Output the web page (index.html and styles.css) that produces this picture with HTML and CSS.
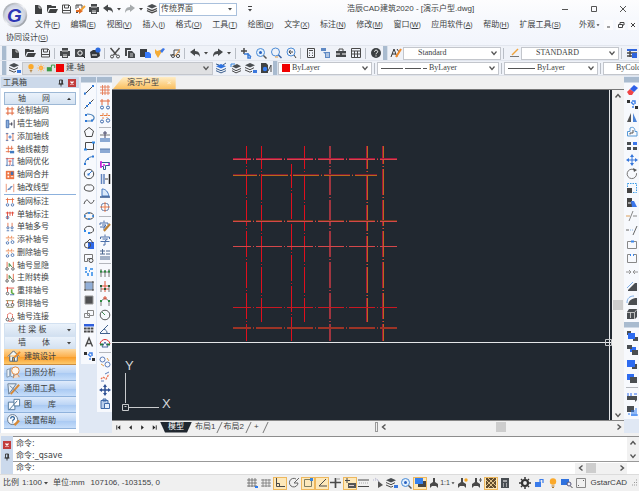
FILE: index.html
```html
<!DOCTYPE html>
<html lang="zh-CN">
<head>
<meta charset="utf-8">
<title>浩辰CAD建筑2020</title>
<link rel="stylesheet" href="styles.css">
</head>
<body>
<svg class="sprite" aria-hidden="true">
<defs>
<linearGradient id="silver" x1="0" y1="0" x2="1" y2="1"><stop offset="0" stop-color="#8b9098"/><stop offset=".5" stop-color="#f4f5f8"/><stop offset="1" stop-color="#777d86"/></linearGradient>
<radialGradient id="face"><stop offset="0" stop-color="#fff"/><stop offset="1" stop-color="#c9cfdd"/></radialGradient>
</defs>
<g>
<symbol id="new" viewBox="0 0 12 12"><path d="M3 2h4l3 3v6H3z" fill="#3f4142" stroke="none"/><path d="M7 2v3h3" stroke="#fff" stroke-width=".7"/></symbol>
<symbol id="open" viewBox="0 0 12 12"><path d="M1 10V2h4l1 1h4v2H3zM4 6h8l-2 4H2z" fill="#3f4142" stroke="none"/></symbol>
<symbol id="save" viewBox="0 0 12 12"><path d="M2.500 10V2H9l1.500 1.500V10zM4.500 2v3h4V2M3 7.500h7"/></symbol>
<symbol id="saveas" viewBox="0 0 12 12"><path d="M2 6V2h6v3M2 9.500h2M4 2v3"/><path d="M2 7h3V5l4 3-4 3V9H2z" fill="#e06c24" stroke="none"/><path d="M7 7l4-4" stroke="#f2a030" stroke-width="2"/></symbol>
<symbol id="print" viewBox="0 0 12 12"><path d="M3 1h6v3h2v5H9v2H3V9H1V4h2z" fill="#46494c" stroke="none"/><path d="M3 4h6M4 8h4M4 9.500h4" stroke="#fff" stroke-width=".8"/></symbol>
<symbol id="undo" viewBox="0 0 12 12"><path d="M1 5l5-3.500V4c4 0 5 3 5 6-1-2-2-3-5-3v2z" fill="#45484a" stroke="none"/></symbol>
<symbol id="redo" viewBox="0 0 12 12"><path d="M11 5L6 1.500V4C2 4 1 7 1 10c1-2 2-3 5-3v2z" fill="#45484a" stroke="none"/></symbol>
<symbol id="redooff" viewBox="0 0 12 12"><path d="M11 5L6 1.500V4C2 4 1 7 1 10c1-2 2-3 5-3v2z" fill="#a7abad" stroke="none"/></symbol>
<symbol id="layers" viewBox="0 0 12 12"><path d="M6 1l5 2.200-5 2.300-5-2.300z" fill="#4a4e52" stroke="none"/><path d="M1 5.500l5 2.200 5-2.200M1 7.700l5 2.200 5-2.200" stroke-width="1.300"/></symbol>
<symbol id="layersb" viewBox="0 0 12 12"><path d="M5 1l5 2.200-5 2.300-5-2.300z" fill="#4a4e52" stroke="none"/><path d="M0 5.500l5 2.200 4-2M0 8l5 2.200 2-1"/><path d="M8 8h4v3H8z" fill="#3b78dc" stroke="none"/></symbol>
<symbol id="layersc" viewBox="0 0 12 12"><path d="M6 2l5 2.200-5 2.300-5-2.300z" fill="#2f72df" stroke="none"/><path d="M1 6.500l5 2.200 5-2.200M1 8.700l5 2.200 5-2.200M1 2l3 1M8 3l3-2" stroke="#3c5f8c"/></symbol>
<symbol id="layersd" viewBox="0 0 12 12"><path d="M7 2l4 2.200-5 2.300-4-2.300z" fill="#4a4e52" stroke="none"/><path d="M2 6.500l4 2.200 5-2.200M2 8.700l4 2.200 5-2.200"/><path d="M1 5V2h4" stroke="#2f82e0"/></symbol>
<symbol id="filed" viewBox="0 0 12 12"><path d="M1 1h5l2 2v8H1z" fill="#3f4142" stroke="none"/><circle cx="5" cy="7" r="2.200" fill="#347bf0" stroke="none"/><path d="M8 9l3-6v7" /></symbol>
<symbol id="preview" viewBox="0 0 12 12"><path d="M1 2h10v8H1z" fill="#46494c" stroke="none"/><circle cx="6" cy="6" r="2.200" stroke="#fff"/><path d="M8 8l3 3" stroke="#222"/></symbol>
<symbol id="plot" viewBox="0 0 12 12"><path d="M1 5l3-2h6l1 6-3 2H2z" fill="#34383c" stroke="none"/><path d="M3 8h5" stroke="#fff"/><circle cx="9" cy="3" r="2.600" fill="#2c6bdf" stroke="none"/></symbol>
<symbol id="cut" viewBox="0 0 12 12"><path d="M1.500 1l6 7M10.500 1l-6 7" stroke-width="1.500"/><circle cx="3" cy="9.500" r="1.500"/><circle cx="9" cy="9.500" r="1.500"/></symbol>
<symbol id="copy" viewBox="0 0 12 12"><path d="M1 1h6v2H3v6H1z M4 4h4l3 3v4H4z" fill="#46494c" stroke="none"/><path d="M6 7h3M6 9h3" stroke="#fff" stroke-width=".7"/></symbol>
<symbol id="paste" viewBox="0 0 12 12"><path d="M1 2h7v8H1z" fill="#3b3f44" stroke="none"/><path d="M6 5h4l2 2v4H6z" fill="#377bff" stroke="none"/></symbol>
<symbol id="brush" viewBox="0 0 12 12"><path d="M1 2l2 2 6-2-2 4-3 5-3-5z" fill="#f5ad38" stroke="none"/><path d="M6 4l3-3 2 1-3 4z" fill="#3a76e8" stroke="none"/></symbol>
<symbol id="block" viewBox="0 0 12 12"><path d="M1 8h4V3h5v3"/><circle cx="4" cy="9" r="1.500"/><path d="M6 9l5-7" stroke="#f0a040"/><circle cx="9" cy="9" r="1.600"/></symbol>
<symbol id="pan" viewBox="0 0 12 12"><path d="M4 1v6M1 4h6" stroke-width="1.500"/><path d="M4 7h4l3 3M8 6v5h3" stroke="#3b7cd8" stroke-width="1.500"/></symbol>
<symbol id="zoomin" viewBox="0 0 12 12"><circle cx="5.500" cy="5.500" r="4" stroke="#4b8bd6" fill="#e2f0fc"/><circle cx="5.500" cy="5.500" r="1.500" fill="#2860c0" stroke="none"/><path d="M8.500 8.500l3 3" stroke="#555" stroke-width="1.500"/></symbol>
<symbol id="zoomw" viewBox="0 0 12 12"><circle cx="5.500" cy="5" r="4" stroke="#4b8bd6"/><path d="M8.500 8l3 3" stroke="#3860a0" stroke-width="1.500"/><path d="M5 10h3" stroke="#e49c40"/></symbol>
<symbol id="zoomp" viewBox="0 0 12 12"><circle cx="6" cy="5" r="4" stroke="#4b8bd6"/><path d="M8 5H4m1.500-2L4 5l2 2M9 8l2 3" stroke="#444"/></symbol>
<symbol id="calc" viewBox="0 0 12 12"><path d="M2.500 1.500h7v9h-7zM4 3.500h4M4 6h1m2 0h1M4 8.500h1m2 0h1"/></symbol>
<symbol id="props" viewBox="0 0 12 12"><path d="M1 1h5v3H1zM3 5h7v6H5V7z" fill="#5f89c4" stroke="none"/><path d="M6 7h3M6 9h3" stroke="#fff"/></symbol>
<symbol id="case" viewBox="0 0 12 12"><path d="M1 4h10v6H1z" fill="#46494c" stroke="none"/><path d="M4 4V2h4v2"/><path d="M1 7h4m2 0h4" stroke="#fff"/></symbol>
<symbol id="table" viewBox="0 0 12 12"><path d="M1.500 1.500h9v9h-9zM1.500 4h9M1.500 7h9M4.500 4v6M7.500 4v6" /></symbol>
<symbol id="help" viewBox="0 0 12 12"><circle cx="6" cy="6" r="5" fill="#3b3f42" stroke="none"/><path d="M4.500 4.700c0-2 3.200-2 3.200 0C7.700 6 6 5.700 6 7.300M6 8.300v1.200" stroke="#fff"/></symbol>
<symbol id="textstyle" viewBox="0 0 12 12"><path d="M1 10l3-8 3 8M2 7h4M7 2l2 3" stroke="#333"/><path d="M6 10l5-8" stroke="#ef8b2c" stroke-width="2"/></symbol>
<symbol id="dimstyle" viewBox="0 0 12 12"><path d="M2 9.500h9" stroke="#777"/><path d="M4 8l6-6" stroke="#efa33c" stroke-width="1.500"/></symbol>
<symbol id="tablestyle" viewBox="0 0 12 12"><path d="M1 2h10v2H1z" fill="#2f64dd" stroke="none"/><path d="M1 6h10M1 9h5M4 4v6" stroke-width="1.500"/><path d="M6 6h5v5H6z" fill="#2f64dd" stroke="none"/></symbol>
<symbol id="bulb" viewBox="0 0 12 12"><circle cx="6" cy="4.500" r="3.200" fill="#fba92a" stroke="none"/><path d="M4.500 9h3M5 10.500h2" stroke="#b07a30"/></symbol>
<symbol id="sun" viewBox="0 0 12 12"><circle cx="6" cy="6" r="2.600" fill="#ffa126" stroke="none"/><path d="M6 1v10M1 6h10M2.500 2.500l7 7M9.500 2.500l-7 7" stroke="#ffb85a" stroke-width=".8"/></symbol>
<symbol id="unlock" viewBox="0 0 12 12"><path d="M1 5h6v5H1z" fill="#3a9b46" stroke="none"/><path d="M6.500 5V2.500h4V6" stroke="#3a9b46" stroke-width="1.200"/></symbol>
<symbol id="unlockb" viewBox="0 0 12 12"><path d="M2 5h6v5H2z" fill="#3a7bea" stroke="none"/><path d="M7 5V2.500h3V6" stroke="#3a7bea" stroke-width="1.200"/></symbol>
<symbol id="chev" viewBox="0 0 8 8"><path d="M1.500 2.500L4 5.500l2.500-3" stroke="#555" stroke-width="1.200"/></symbol>
<symbol id="chevu" viewBox="0 0 8 8"><path d="M1.500 5.500L4 2.500l2.500 3" stroke="#555" stroke-width="1.400"/></symbol>
<symbol id="chevl" viewBox="0 0 8 8"><path d="M5.500 1.500L2.500 4l3 2.500" stroke="#555" stroke-width="1.400"/></symbol>
<symbol id="chevr" viewBox="0 0 8 8"><path d="M2.500 1.500L5.500 4l-3 2.500" stroke="#555" stroke-width="1.400"/></symbol>
<symbol id="tri" viewBox="0 0 8 8"><path d="M2 3h4L4 5.500z" fill="#444" stroke="none"/></symbol>
<symbol id="triu" viewBox="0 0 8 8"><path d="M2 5h4L4 2.800z" fill="#333" stroke="none"/></symbol>
<symbol id="more" viewBox="0 0 8 8"><path d="M2 1.500h4" stroke="#444"/><path d="M2 4h4L4 6.500z" fill="#444" stroke="none"/></symbol>
<symbol id="first" viewBox="0 0 8 8"><path d="M2 1.500v5" stroke="#222"/><path d="M6 1.500v5L3 4z" fill="#222" stroke="none"/></symbol>
<symbol id="prev" viewBox="0 0 8 8"><path d="M5.500 1.500v5L2.500 4z" fill="#222" stroke="none"/></symbol>
<symbol id="next" viewBox="0 0 8 8"><path d="M2.500 1.500v5l3-2.500z" fill="#222" stroke="none"/></symbol>
<symbol id="last" viewBox="0 0 8 8"><path d="M6 1.500v5" stroke="#222"/><path d="M2 1.500v5L5 4z" fill="#222" stroke="none"/></symbol>
<symbol id="pin" viewBox="0 0 8 8"><path d="M2.500 1h3v4h-3zM1.500 5h5M4 5v2.500M4.800 1v4" stroke="#333" stroke-width=".9"/></symbol>
<symbol id="close" viewBox="0 0 8 8"><path d="M0 0h8v8H0z" fill="#c23c3c" stroke="none"/><path d="M2.500 2.500l3 3M5.500 2.500l-3 3" stroke="#fff" stroke-width="1.300"/></symbol>

<symbol id="g-grid" viewBox="0 0 12 12"><path d="M3.500 1v10M8.500 1v10M1 3.500h10M1 8.500h10" stroke="#e2693f" stroke-width="1.200"/></symbol>
<symbol id="g-wall" viewBox="0 0 12 12"><path d="M1.500 1.500h3v9h-3z" fill="#8cb0de" stroke="#3d69ab"/><path d="M5 6h4M8 4v4M11 1v10" stroke="#334"/></symbol>
<symbol id="g-add" viewBox="0 0 12 12"><path d="M2.500 1v10M9.500 1v10" stroke="#e2693f"/><path d="M1 2h3M8 2h3M1 10h3M8 10h3" stroke="#3d69ab"/><path d="M6 4v4M4 6h4" stroke="#2867c8"/></symbol>
<symbol id="g-trim" viewBox="0 0 12 12"><path d="M4 1v8M8 1v5M1 4h9M1 8h5" stroke="#e2693f"/><path d="M6 7h5v3H6z" fill="#3f7ac0" stroke="none"/></symbol>
<symbol id="g-opt" viewBox="0 0 12 12"><path d="M2.500 1v10M9.500 1v10" stroke="#3d69ab"/><path d="M1 2h10M6 4v6M4 5h4" stroke="#dd4d42"/><path d="M1 10h10" stroke="#3d69ab" stroke-dasharray="2 1"/></symbol>
<symbol id="g-merge" viewBox="0 0 12 12"><path d="M1 1h10v10H1z" fill="#ee7644" stroke="none"/><path d="M3 3h2v2H3zM3 7h2v2H3z" fill="#fff" stroke="none"/><path d="M7 2h3v4H7z" fill="#4570af" stroke="none"/><path d="M7 8h3" stroke="#fff"/></symbol>
<symbol id="g-type" viewBox="0 0 12 12"><path d="M1.500 1v10M10.500 1v10" stroke="#e2693f" stroke-width=".8"/><path d="M3 8l4-1M6 5l3-1M4 7l4-2" stroke="#3d69ab"/></symbol>
<symbol id="g-dim" viewBox="0 0 12 12"><path d="M3 1v6M9 1v6M1 3h10" stroke="#e2693f"/><circle cx="3" cy="9.500" r="1.500" stroke="#3d69ab"/><circle cx="9" cy="9.500" r="1.500" stroke="#3d69ab"/></symbol>
<symbol id="g-single" viewBox="0 0 12 12"><path d="M3 2v9M6 2v5M9 2v5M1 3.500h10" stroke="#df3d2c"/><circle cx="3" cy="9" r="1.500" stroke="#3d69ab"/></symbol>
<symbol id="g-multi" viewBox="0 0 12 12"><path d="M3.500 1v5M8.500 1v5" stroke="#e2693f"/><circle cx="3.500" cy="7" r="1.300" stroke="#3d69ab"/><circle cx="8.500" cy="7" r="1.300" stroke="#3d69ab"/><path d="M2 10.500h3M7 10.500h3" stroke="#3d69ab"/></symbol>
<symbol id="g-num" viewBox="0 0 12 12"><path d="M1 3.500h10M4 1v6M8 1v5" stroke="#e98044" stroke-dasharray="3 1"/><circle cx="3" cy="9.500" r="1.500" stroke="#3d69ab"/><circle cx="9" cy="8.500" r="1.700" stroke="#3d69ab"/></symbol>
<symbol id="g-show" viewBox="0 0 12 12"><path d="M2.500 1v7M10 1v7" stroke="#df5b37"/><path d="M5 3l3 4M5 7V3" stroke="#36853b" stroke-width="1.200"/><circle cx="2.500" cy="9.500" r="1.500"/><circle cx="9.500" cy="9.500" r="1.500"/></symbol>
<symbol id="g-sort" viewBox="0 0 12 12"><path d="M1 2.500h10M3 1v6" stroke="#df3d2c"/><circle cx="3" cy="9" r="1.500"/><path d="M8 4v4l3 2" stroke="#66ad46" stroke-width="2"/><path d="M6 10.500h5" stroke="#3d69ab"/></symbol>
<symbol id="g-rev" viewBox="0 0 12 12"><path d="M1 2h10M2 10h8" stroke="#7f7d43"/><path d="M3 2v4M9 2v4" stroke="#e2693f"/><circle cx="3" cy="7" r="1.700"/><circle cx="9" cy="7" r="1.700"/></symbol>
<symbol id="g-link" viewBox="0 0 12 12"><path d="M3 7V3l3-2 3 2v4" stroke="#df3d2c" stroke-dasharray="2 .6"/><circle cx="3" cy="9" r="1.700"/><circle cx="9" cy="9" r="1.700"/><path d="M4 11h4" stroke="#df3d2c"/></symbol>

<symbol id="line" viewBox="0 0 12 12"><path d="M1.500 10.500l9-9"/><path d="M1 9.500h2M9 2h2" stroke="#2e78d6" stroke-width="2"/></symbol>
<symbol id="xline" viewBox="0 0 12 12"><path d="M1.500 10.500l9-9"/><path d="M3 8h2M6 5h2" stroke="#2e78d6" stroke-width="2"/></symbol>
<symbol id="pline" viewBox="0 0 12 12"><path d="M4 2c7 0 9 4 5 7H2" stroke="#4f84b9" stroke-width="1.200"/><path d="M2 3h2M2 9h2M8 8.500h2" stroke="#2e78d6" stroke-width="2"/></symbol>
<symbol id="polygon" viewBox="0 0 12 12"><path d="M6 1.500L10.500 5 9 10.500H3L1.500 5z"/></symbol>
<symbol id="rect" viewBox="0 0 12 12"><path d="M2.500 2.500h8v7h-8z"/><path d="M1 9.500h3M9 2.500h3" stroke="#2e88e6" stroke-width="2"/></symbol>
<symbol id="arc" viewBox="0 0 12 12"><path d="M2 10c0-4 3-7 8-7.500" stroke="#447bb2"/><path d="M1 10h2M4 5h2M9 2.500h2" stroke="#2e78d6" stroke-width="2"/></symbol>
<symbol id="circle" viewBox="0 0 12 12"><circle cx="6" cy="6" r="4.700"/><path d="M5 7l4-4" stroke="#2e78d6"/><path d="M4.500 6.500h2" stroke="#2e78d6" stroke-width="2"/></symbol>
<symbol id="cloud" viewBox="0 0 12 12"><path d="M2 8C0 5 3 2 6 3c4-1 6 3 4 5-2 2-6 1-8 0z"/></symbol>
<symbol id="spline" viewBox="0 0 12 12"><path d="M1 8c2-6 4-4 5-2s4 2 5-2"/></symbol>
<symbol id="ellipse" viewBox="0 0 12 12"><ellipse cx="6" cy="6" rx="4.500" ry="3.200"/><path d="M1 6h2M9 6h2M5 3h2M5 9h2" stroke="#2e88e6" stroke-width="1.500"/></symbol>
<symbol id="earc" viewBox="0 0 12 12"><path d="M1.500 6c0-5 9-5 9 0 0 2-2 3-4 3"/><path d="M1 7h2M5 9h2" stroke="#2e88e6" stroke-width="2"/></symbol>
<symbol id="insert" viewBox="0 0 12 12"><path d="M5 4h6v7H5z" fill="#2f69e8" stroke="none"/><circle cx="4.500" cy="7" r="3"/><path d="M3 5l4-4 3 4"/></symbol>
<symbol id="mkblock" viewBox="0 0 12 12"><path d="M1.500 2.500h8v4h-5v3h-3z" stroke="#777"/><circle cx="8" cy="8.500" r="2"/></symbol>
<symbol id="point" viewBox="0 0 12 12"><path d="M3 1v3M2 6h2M7 3h3M5 7v3M9 6v4M6 5h1" stroke="#2e88e6" stroke-width="1.500"/></symbol>
<symbol id="hatch" viewBox="0 0 12 12"><path d="M2 2h8v8H2z" fill="#91afd8" stroke="#777"/><path d="M1 2h2M9 2h2M1 10h2M9 10h2" stroke="#444"/></symbol>
<symbol id="grad" viewBox="0 0 12 12"><path d="M2 2h8v8H2z" fill="#4f5052" stroke="#999"/></symbol>
<symbol id="region" viewBox="0 0 12 12"><path d="M4.500 2.500h6v5h-6zM1.500 5.500h5v4h-5z" stroke="#888"/></symbol>
<symbol id="tbl" viewBox="0 0 12 12"><path d="M1 2h10v2.500H1z" fill="#2f5fdd" stroke="none"/><path d="M1 6.500h10M1 9.500h10" stroke-width="2" stroke-dasharray="2.700 .6"/></symbol>
<symbol id="mtext" viewBox="0 0 12 12"><path d="M2.500 10.500L6 2l3.500 8.500M3.700 7.500h4.600" stroke-width="1.400"/></symbol>
<symbol id="move3" viewBox="0 0 12 12"><path d="M1 2h3v3H1zM9 8h3v3H9z" fill="#333" stroke="none"/><path d="M6 3h3v3M5 4l3 3M6 9h2" stroke="#3f80e8" stroke-width="1.500"/></symbol>

<symbol id="r-grid" viewBox="0 0 12 12"><path d="M3.500 1v10M6 1v10M9 1v10M1 3h10M1 6h10M1 9h10" stroke="#e47a55" stroke-width=".9"/></symbol>
<symbol id="r-clean" viewBox="0 0 12 12"><path d="M1 4h10" stroke="#777"/><path d="M1 7h10v4H1z" fill="#8ba9d3" stroke="none"/><path d="M6 0v7M4 2h4" stroke="#446"/></symbol>
<symbol id="r-bar" viewBox="0 0 12 12"><path d="M1 4h10v4H1z" fill="#8ba9d3" stroke="none"/><path d="M1 4h10" stroke="#5b7cac"/></symbol>
<symbol id="r-door" viewBox="0 0 12 12"><path d="M1.500 3.500h9v3h-4v4h-2v-3h-3z" stroke="#34578f"/><path d="M2 2v7M5 5v2M9 5h2" stroke="#dc22df" stroke-width="1.600"/></symbol>
<symbol id="r-win" viewBox="0 0 12 12"><path d="M2.500 1v10M5 1v10" stroke="#6284bf" stroke-width="1.500"/><path d="M6 6h3" /><path d="M10.500 1v10" stroke="#222" stroke-width="1.500"/></symbol>
<symbol id="r-arc" viewBox="0 0 12 12"><path d="M3 9V2c4 0 6 3 7 7z" fill="#dbe9fa" stroke="#4476bd"/><path d="M1 10h10" stroke="#34578f" stroke-width="1.500"/></symbol>
<symbol id="r-target" viewBox="0 0 12 12"><rect x="2.500" y="2.500" width="7" height="7" rx="2" stroke="#6980a8"/><path d="M6 1v10M1 6h10" stroke="#ed7c4a"/></symbol>
<symbol id="r-sym" viewBox="0 0 12 12"><path d="M6 .5v2M1.500 5V3h9v2M3.500 5h5L6 7v4H4M1.500 7.500h9" stroke="#4a6fa9"/></symbol>
<symbol id="r-symp" viewBox="0 0 12 12"><path d="M5 .5v2M1 5V3h8v2M3 5h4L5 7v3M1 7h8" stroke="#4a6fa9"/><path d="M5 11l6-7" stroke="#bd8133" stroke-width="2"/></symbol>
<symbol id="r-para" viewBox="0 0 12 12"><path d="M1 3h5M3.500 1v5M1 6h5M7 3h4M7 6h4M1 9h10M1 11h10" stroke="#4f698f"/></symbol>
<symbol id="r-d1" viewBox="0 0 12 12"><path d="M2 2v8M6 3v7M10 2v8M1 5h10" stroke="#777"/><path d="M1 4.500h2M5 4.500h2M9 4.500h2" stroke="#2c8a40" stroke-width="2"/></symbol>
<symbol id="r-d2" viewBox="0 0 12 12"><path d="M6 0v11M1 5h10M2 8h8" stroke="#df5038"/><path d="M2 5v6M10 5v6" stroke="#777"/><path d="M1 5h2M9 5h2M5 8h2" stroke="#265e34" stroke-width="2"/></symbol>
<symbol id="r-d3" viewBox="0 0 12 12"><path d="M2 11V6l4-3 4 3v5" stroke="#777"/><path d="M6 1v4M4 3h4" stroke="#df5038"/><path d="M1 6h2M9 6h2" stroke="#2c8a40" stroke-width="2"/></symbol>
<symbol id="r-c" viewBox="0 0 12 12"><circle cx="6" cy="6" r="4.800" stroke="#555"/><path d="M3 3l3 3" stroke="#3c8a50"/></symbol>
<symbol id="r-ang" viewBox="0 0 12 12"><path d="M1 10.500h10M1 10l8-8M5 6c2 1 3 2 3 4" stroke="#40618e"/></symbol>
<symbol id="r-d4" viewBox="0 0 12 12"><path d="M1 7c1-6 9-6 10 0" stroke="#df3030"/><path d="M3 10l3-5 3 5z" stroke="#4b68a0"/><path d="M1 7.500h3M8 7.500h3" stroke="#277b3e" stroke-width="2"/></symbol>
<symbol id="r-cc" viewBox="0 0 12 12"><circle cx="3.500" cy="3.500" r="2.500" stroke="#5c7db8"/><circle cx="8.500" cy="8.500" r="2.500" stroke="#5c7db8"/><path d="M8 2l2 3M2 8l3 2" stroke="#de9c4a"/></symbol>
<symbol id="r-ln" viewBox="0 0 12 12"><path d="M2 9l2-2 3 2 3-5" stroke="#ed7350" stroke-width="1.300" stroke-dasharray="2 1"/><path d="M6 4l4-2M2 11h3" stroke="#5c7db8"/></symbol>
<symbol id="r-mv" viewBox="0 0 12 12"><path d="M6 2v8M2 6h8" stroke="#2c4f93" stroke-width="1.500"/><path d="M6 0l2 3H4zM6 12l2-3H4zM0 6l3 2V4zM12 6L9 8V4z" fill="#2c4f93" stroke="none"/></symbol>
<symbol id="r-pg" viewBox="0 0 12 12"><path d="M2 2.500h7v8H2zM4 1h3v2H4z" stroke="#3f69a8" fill="#b9cdea"/><path d="M5.500 5.500h5v5h-5z" stroke="#3f69a8" fill="#e5eefb"/></symbol>

<symbol id="erase" viewBox="0 0 12 12"><path d="M1 8l3-3 4 3-2 3H3z" fill="#f04545" stroke="none"/><path d="M4 5l4-4 4 3-4 4z" fill="#2d5fe8" stroke="none"/></symbol>
<symbol id="mirror" viewBox="0 0 12 12"><path d="M5 1v9H1z" fill="#555" stroke="none"/><path d="M7 1v9h4z" fill="#4c84d8" stroke="none"/></symbol>
<symbol id="offset" viewBox="0 0 12 12"><path d="M1.500 10V5.500H4V2c4-2 5 1 5 3.500h2V10z" stroke="#5799d6"/><path d="M4 8.500V7h3V4" stroke="#555"/></symbol>
<symbol id="array" viewBox="0 0 12 12"><path d="M1 2h4v3H1zM7 7h4v3H7zM1 7h4v3H1z" fill="#4a4e52" stroke="none"/><path d="M7 2h4v3H7z" fill="#3b76ea" stroke="none"/></symbol>
<symbol id="move" viewBox="0 0 12 12"><path d="M6 2v8M2 6h8" stroke="#3475da"/><path d="M6 0l2 3H4zM6 12l2-3H4zM0 6l3 2V4zM12 6L9 8V4z" fill="#3475da" stroke="none"/></symbol>
<symbol id="rotate" viewBox="0 0 12 12"><path d="M8 1.700a4.700 4.700 0 1 0 2.500 3.500" stroke="#777"/><path d="M7 0l4 2-3 2z" fill="#555" stroke="none"/></symbol>
<symbol id="scale" viewBox="0 0 12 12"><path d="M1.500 1.500h9v9h-9z" stroke="#3b9ce8" stroke-dasharray="1.500 1"/><path d="M1 6h5v5H1z" fill="#444" stroke="none"/></symbol>
<symbol id="stretch" viewBox="0 0 12 12"><path d="M1 2h5v9H1z" fill="#444" stroke="none"/><path d="M5 5h3l3 6H6z" fill="#3b76ea" stroke="none"/><path d="M2 7h3" stroke="#fff"/></symbol>
<symbol id="trim" viewBox="0 0 12 12"><path d="M3 11l4-10M7 6h4" stroke="#888"/><path d="M0 6h4" stroke="#dca05c"/></symbol>
<symbol id="extend" viewBox="0 0 12 12"><path d="M7 11l4-9" stroke="#666"/><path d="M0 6h3" stroke="#666"/><path d="M4 6h4" stroke="#8ab8e8" stroke-dasharray="1 1"/></symbol>
<symbol id="break1" viewBox="0 0 12 12"><path d="M1.500 3.500h9v7h-9z" stroke="#888"/><path d="M5 3.500h3" stroke="#3b86ea" stroke-width="2"/></symbol>
<symbol id="break2" viewBox="0 0 12 12"><path d="M4 2.500H1.500v8h9v-8H8" stroke="#888"/><path d="M4 3h1M7 3h1" stroke="#3b86ea" stroke-width="2"/></symbol>
<symbol id="join" viewBox="0 0 12 12"><path d="M0 6h4M8 6h4M3 4l2 2-2 2M9 4L7 6l2 2" stroke="#888" stroke-width=".9"/></symbol>
<symbol id="chamfer" viewBox="0 0 12 12"><path d="M2 11v-1l7-7h2v8z" fill="#4a4e52" stroke="none"/><path d="M1 8l6-6" stroke="#7fb0e8"/></symbol>
<symbol id="fillet" viewBox="0 0 12 12"><path d="M2 11c1-5 4-7 9-7v7z" fill="#4a4e52" stroke="none"/><path d="M1 9c0-5 3-7 7-7" stroke="#7fb0e8"/></symbol>
<symbol id="box" viewBox="0 0 12 12"><path d="M1 4l2-3h8v8l-2 2H1z" fill="#4a4e52" stroke="none"/><path d="M1 4.500h7.500V11M8.500 4.500L11 1.500M4.500 4.500V10" stroke="#ddd" stroke-width=".8"/></symbol>
<symbol id="o1" viewBox="0 0 12 12"><path d="M1 1h4v4H1zM7 7h5v4H7z" fill="#4a4e52" stroke="none"/><path d="M2 3h7v6H2z" fill="#2d6bf0" stroke="none"/></symbol>
<symbol id="o2" viewBox="0 0 12 12"><path d="M4 3h6v5H4z" fill="#2d6bf0" stroke="none"/><path d="M1 1h5v4H1zM6 6h6v5H6z" fill="#4a4e52" stroke="none"/></symbol>
<symbol id="o3" viewBox="0 0 12 12"><path d="M6 6h5v5H6z" fill="#4a4e52" stroke="none"/><path d="M1 2h8v7H1z" fill="#2d6bf0" stroke="none"/></symbol>
<symbol id="o4" viewBox="0 0 12 12"><path d="M1 2h7v6H1z" fill="#2d6bf0" stroke="none"/><path d="M4 5h7v6H4z" fill="#4a4e52" stroke="none"/></symbol>
<symbol id="o5" viewBox="0 0 12 12"><path d="M1 5h10v4l-2 2V9H1z" fill="#4a4e52" stroke="none"/><path d="M2 2v3M5 2v3M8 3h3" stroke="#2d6bf0"/></symbol>
<symbol id="o6" viewBox="0 0 12 12"><path d="M1 1h7v6H1z" fill="#4a4e52" stroke="none"/><path d="M2 9h2M6 5v6M8 5v6M10 3v8M5 10h7" stroke="#2d7bf0"/></symbol>

<symbol id="p-home" viewBox="0 0 16 16"><path d="M2 8l6-6 6 6M4 7v6h8V7M7 13V9h2v4" stroke="#4a6076" fill="#f3f5f2"/><path d="M9 9l6-6" stroke="#f08b24" stroke-width="2"/></symbol>
<symbol id="p-sun" viewBox="0 0 16 16"><path d="M1 5l3-1v8l-3 1zM5 3l3 1v9l-3-1z" fill="#eaf2fa" stroke="#8095ac"/><circle cx="10" cy="6" r="4" fill="#fff7ed" stroke="#e08338"/><path d="M8 14c0-5 6-5 6-1" stroke="#c78a5a" fill="#f4dcc8"/></symbol>
<symbol id="p-tool" viewBox="0 0 16 16"><path d="M2 3h9L3 14z" fill="#e5eef7" stroke="#667c93"/><path d="M5 14l9-10" stroke="#d98a35" stroke-width="2"/><path d="M4 5l9 8" stroke="#70879f"/></symbol>
<symbol id="p-lib" viewBox="0 0 16 16"><path d="M2.500 5.500h7v8h-7z" fill="#f5f9fd" stroke="#52789b"/><path d="M8.500 2.500h6v7h-6z" fill="#fff" stroke="#4d7597"/><path d="M3 14l9-10" stroke="#4d7597"/></symbol>
<symbol id="p-help" viewBox="0 0 16 16"><circle cx="7" cy="7" r="5.300" fill="#fafcff" stroke="#5d7085"/><path d="M5 6c0-3 4-3 4 0 0 1-2 1-2 3M7 10v1" stroke="#34669b" stroke-width="1.300"/><path d="M9 13l5-5" stroke="#d98a35" stroke-width="2.500"/></symbol>

<symbol id="s-snap" viewBox="0 0 12 12"><path d="M3 1v9M6 1v9M9 1v9M1 3h10M1 6h10M1 9h10" stroke="#666" stroke-width=".8"/><path d="M9 10h3" stroke="#2d7bf0" stroke-width="2"/></symbol>
<symbol id="s-grid" viewBox="0 0 12 12"><path d="M3 2v8M6 2v8M9 2v8M1 3h10M1 6h10M1 9h10" stroke="#777" stroke-width=".8"/></symbol>
<symbol id="s-ortho" viewBox="0 0 12 12"><path d="M2.500 1v8.500H11M2.500 6.500h3v3"/></symbol>
<symbol id="s-polar" viewBox="0 0 12 12"><path d="M8 2a4.300 4.300 0 1 0 2 4H6l5-5" stroke="#666"/></symbol>
<symbol id="s-osnap" viewBox="0 0 12 12"><path d="M2.500 2.500h7v7h-7z" stroke="#7e7e60"/><path d="M8 1h3v3H8z" fill="#3986df" stroke="none"/></symbol>
<symbol id="s-track" viewBox="0 0 12 12"><path d="M10 2L3 9h8"/></symbol>
<symbol id="s-plus" viewBox="0 0 12 12"><path d="M5.500 1v10M0 5.500h11" stroke-width="1.700"/><path d="M7 2h3" stroke="#999"/></symbol>
<symbol id="s-dyn" viewBox="0 0 12 12"><path d="M3 1v5M1 3.500h5" /><path d="M4 6h8v5H4z" fill="#555" stroke="none"/><path d="M5 8.500h5" stroke="#dcc"/></symbol>
<symbol id="s-lw" viewBox="0 0 12 12"><path d="M0 3h11M0 9.500h11"/><path d="M1 6h10" stroke="#aaa" stroke-dasharray="1 1"/></symbol>
<symbol id="s-cycle" viewBox="0 0 12 12"><path d="M6 4v7l5-3z" fill="#555" stroke="none"/><path d="M1 3h6M3 1l5 4" stroke="#b3b3cf" stroke-dasharray="1 1"/></symbol>
<symbol id="s-sel" viewBox="0 0 12 12"><path d="M4 4h8v6H4z" fill="#444" stroke="none"/><path d="M1 1h8v6H1z" fill="#3580ed" stroke="none"/></symbol>
<symbol id="s-man" viewBox="0 0 12 12"><path d="M5 1h2v4l3 2v4L8 9H4l-2 2V7l3-2z" fill="#4a4a4a" stroke="none"/></symbol>
<symbol id="s-many" viewBox="0 0 12 12"><path d="M4 1h2v4l3 2v4L7 9H3l-2 2V7l3-2z" fill="#4a4a4a" stroke="none"/><circle cx="9" cy="3" r="1.700" fill="#f5a623" stroke="none"/></symbol>
<symbol id="s-mana" viewBox="0 0 12 12"><path d="M4 1h2v4l3 2v4L7 9H3l-2 2V7l3-2z" fill="#4a4a4a" stroke="none"/><path d="M8 3h3M9.500 1v4" stroke="#666"/></symbol>
<symbol id="s-hatch" viewBox="0 0 12 12"><path d="M1 1h10v10H1z" fill="#604b2d" stroke="none"/><path d="M1 3l8 8M3 1l8 8M1 9l8-8M3 11l8-8" stroke="#ffe0a0" stroke-width=".8"/></symbol>
<symbol id="s-page" viewBox="0 0 12 12"><path d="M2 1h8v10H2z" fill="#484d52" stroke="none"/><path d="M4 4h4M4 7h1M7 7h1M4 9h1M7 9h1" stroke="#fff"/></symbol>
<symbol id="s-gear" viewBox="0 0 12 12"><circle cx="6" cy="6" r="3" stroke="#333" stroke-width="2.200"/><path d="M6 0v2M6 10v2M0 6h2M10 6h2M2 2l1 1M9 9l1 1M2 10l1-1M9 3l1-1" stroke="#333" stroke-width="1.500"/></symbol>
<symbol id="s-mon" viewBox="0 0 12 12"><path d="M0 2h8v6H0z" fill="#2f72df" stroke="none"/><circle cx="8" cy="7" r="2" fill="#eef" stroke="#557"/><path d="M9.500 9l2 2"/></symbol>
<symbol id="s-full" viewBox="0 0 12 12"><path d="M1.500 1.500h9v9h-9z" stroke="#888"/><path d="M3 9l1-1M8 4l1-1" stroke="#666"/></symbol>
</g>
</svg>

<header class="top">
  <div class="title-row">
    <svg class="logo" viewBox="0 0 26 26" aria-label="浩辰"><circle cx="13" cy="13" r="12.200" fill="url(#silver)"/><circle cx="13" cy="13" r="10.500" fill="url(#face)"/><text x="12.500" y="20" text-anchor="middle" class="logo-letter">G</text></svg>
    <div class="quick">
      <button aria-label="新建"><svg><use href="#new"/></svg></button>
      <button aria-label="打开"><svg><use href="#open"/></svg></button>
      <button aria-label="保存"><svg><use href="#save"/></svg></button>
      <button aria-label="另存为"><svg><use href="#saveas"/></svg></button>
      <button aria-label="打印"><svg><use href="#print"/></svg></button>
      <button aria-label="放弃"><svg><use href="#undo"/></svg></button>
      <button class="slim" aria-label="放弃列表"><svg><use href="#tri"/></svg></button>
      <button aria-label="重做"><svg><use href="#redooff"/></svg></button>
      <button class="slim" aria-label="重做列表"><svg><use href="#tri"/></svg></button>
      <button aria-label="图层"><svg><use href="#layers"/></svg></button>
      <div class="combo workspace"><select aria-label="工作空间"><option>传统界面</option></select><svg><use href="#tri"/></svg></div>
      <button class="slim" aria-label="更多"><svg><use href="#more"/></svg></button>
    </div>
    <h1>浩辰CAD建筑2020 - [演示户型.dwg]</h1>
    <div class="window">
      <button aria-label="最小化"><svg viewBox="0 0 8 8"><path d="M1 4.500h6"/></svg></button>
      <button aria-label="最大化"><svg viewBox="0 0 8 8"><path d="M1.500 1.500h5v5h-5z"/></svg></button>
      <button aria-label="关闭"><svg viewBox="0 0 8 8"><path d="M1 1l6 6M7 1L1 7"/></svg></button>
    </div>
  </div>
  <div class="menu-row">
    <nav class="menus">
      <a href="#">文件<small>(<u>F</u>)</small></a><a href="#">编辑<small>(<u>E</u>)</small></a><a href="#">视图<small>(<u>V</u>)</small></a><a href="#">插入<small>(<u>I</u>)</small></a><a href="#">格式<small>(<u>O</u>)</small></a><a href="#">工具<small>(<u>T</u>)</small></a><a href="#">绘图<small>(<u>D</u>)</small></a><a href="#">文字<small>(<u>X</u>)</small></a><a href="#">标注<small>(<u>N</u>)</small></a><a href="#">修改<small>(<u>M</u>)</small></a><a href="#">窗口<small>(<u>W</u>)</small></a><a href="#">应用软件<small>(<u>A</u>)</small></a><a href="#">帮助<small>(<u>H</u>)</small></a><a href="#">扩展工具<small>(<u>S</u>)</small></a>
    </nav>
    <a class="look" href="#">外观<svg><use href="#tri"/></svg></a>
    <div class="docwin">
      <button aria-label="最小化文档"><svg viewBox="0 0 8 8"><path d="M2 6h3"/></svg></button>
      <button aria-label="还原文档"><svg viewBox="0 0 8 8"><path d="M3 3V1.500h4V4H5.500M1.500 3.500h4v3h-4z"/></svg></button>
      <button aria-label="关闭文档"><svg viewBox="0 0 8 8"><path d="M2 2l4 4M6 2L2 6"/></svg></button>
    </div>
  </div>
  <nav class="menu-extra"><a href="#">协同设计<small>(<u>G</u>)</small></a></nav>
</header>

<div class="bar">
  <i class="grip"></i>
  <button aria-label="新建"><svg><use href="#new"/></svg></button>
  <button aria-label="打开"><svg><use href="#open"/></svg></button>
  <button aria-label="保存"><svg><use href="#save"/></svg></button>
  <i class="sep"></i>
  <button aria-label="打印"><svg><use href="#print"/></svg></button>
  <button aria-label="打印预览"><svg><use href="#preview"/></svg></button>
  <button aria-label="发布"><svg><use href="#plot"/></svg></button>
  <i class="sep"></i>
  <button aria-label="剪切"><svg><use href="#cut"/></svg></button>
  <button aria-label="复制"><svg><use href="#copy"/></svg></button>
  <button aria-label="粘贴"><svg><use href="#paste"/></svg></button>
  <button aria-label="特性匹配"><svg><use href="#brush"/></svg></button>
  <button aria-label="块编辑"><svg><use href="#block"/></svg></button>
  <i class="sep"></i>
  <button aria-label="放弃"><svg><use href="#undo"/></svg></button>
  <button class="slim" aria-label="放弃列表"><svg><use href="#tri"/></svg></button>
  <button aria-label="重做"><svg><use href="#redo"/></svg></button>
  <button class="slim" aria-label="重做列表"><svg><use href="#tri"/></svg></button>
  <i class="sep"></i>
  <button aria-label="平移"><svg><use href="#pan"/></svg></button>
  <button aria-label="实时缩放"><svg><use href="#zoomin"/></svg></button>
  <button aria-label="窗口缩放"><svg><use href="#zoomw"/></svg></button>
  <button aria-label="上一视图"><svg><use href="#zoomp"/></svg></button>
  <i class="sep"></i>
  <button aria-label="特性"><svg><use href="#calc"/></svg></button>
  <button aria-label="设计中心"><svg><use href="#props"/></svg></button>
  <button aria-label="工具选项板"><svg><use href="#case"/></svg></button>
  <button aria-label="计算器"><svg><use href="#table"/></svg></button>
  <i class="sep"></i>
  <button aria-label="帮助"><svg><use href="#help"/></svg></button>
  <i class="grip"></i>
  <button aria-label="文字样式"><svg><use href="#textstyle"/></svg></button>
  <div class="combo cad grow indent"><select aria-label="文字样式列表"><option>Standard</option></select><svg><use href="#chev"/></svg></div>
  <i class="sep"></i>
  <button aria-label="标注样式"><svg><use href="#dimstyle"/></svg></button>
  <div class="combo cad grow indent"><select aria-label="标注样式列表"><option>STANDARD</option></select><svg><use href="#chev"/></svg></div>
  <i class="sep"></i>
  <button aria-label="表格样式"><svg><use href="#tablestyle"/></svg></button>
</div>
<div class="bar">
  <i class="grip"></i>
  <button aria-label="图层特性"><svg><use href="#layersb"/></svg></button>
  <div class="combo layer"><svg><use href="#bulb"/></svg><svg><use href="#sun"/></svg><svg><use href="#unlock"/></svg><b class="swatch"></b><select aria-label="当前图层"><option>建-轴</option></select><svg><use href="#chev"/></svg></div>
  <button aria-label="置为当前"><svg><use href="#layersc"/></svg></button>
  <button aria-label="上一图层"><svg><use href="#layersd"/></svg></button>
  <button aria-label="图层状态"><svg><use href="#layersb"/></svg></button>
  <button aria-label="图层匹配"><svg><use href="#filed"/></svg></button>
  <i class="grip"></i>
  <div class="combo cad color"><b class="swatch"></b><select aria-label="颜色"><option>ByLayer</option></select><svg><use href="#chev"/></svg></div>
  <i class="sep"></i>
  <div class="combo cad grow"><b class="dash long"></b><select aria-label="线型"><option>ByLayer</option></select><svg><use href="#chev"/></svg></div>
  <i class="sep"></i>
  <div class="combo cad color"><b class="dash"></b><select aria-label="线宽"><option>ByLayer</option></select><svg><use href="#chev"/></svg></div>
  <i class="sep"></i>
  <div class="combo cad plot"><select aria-label="打印样式"><option>ByColor</option></select></div>
</div>

<main>
  <aside class="palette">
    <div class="palette-title"><h2>工具箱</h2><button aria-label="固定"><svg><use href="#pin"/></svg></button><button aria-label="关闭工具箱"><svg><use href="#close"/></svg></button></div>
    <button class="group open">轴　　网<svg><use href="#triu"/></svg></button>
    <div class="items">
      <button><svg><use href="#g-grid"/></svg>绘制轴网</button>
      <button><svg><use href="#g-wall"/></svg>墙生轴网</button>
      <button><svg><use href="#g-add"/></svg>添加轴线</button>
      <button><svg><use href="#g-trim"/></svg>轴线裁剪</button>
      <button><svg><use href="#g-opt"/></svg>轴网优化</button>
      <button><svg><use href="#g-merge"/></svg>轴网合并</button>
      <button><svg><use href="#g-type"/></svg>轴改线型</button>
      <hr>
      <button><svg><use href="#g-dim"/></svg>轴网标注</button>
      <button><svg><use href="#g-single"/></svg>单轴标注</button>
      <button><svg><use href="#g-multi"/></svg>单轴多号</button>
      <button><svg><use href="#g-num"/></svg>添补轴号</button>
      <button><svg><use href="#g-num"/></svg>删除轴号</button>
      <button><svg><use href="#g-show"/></svg>轴号显隐</button>
      <button><svg><use href="#g-show"/></svg>主附转换</button>
      <button><svg><use href="#g-sort"/></svg>重排轴号</button>
      <button><svg><use href="#g-rev"/></svg>倒排轴号</button>
      <button><svg><use href="#g-link"/></svg>轴号连接</button>
    </div>
    <button class="group">柱 梁 板<svg><use href="#tri"/></svg></button>
    <button class="group">墙　　体<svg><use href="#tri"/></svg></button>
    <button class="page active"><svg><use href="#p-home"/></svg>建筑设计</button>
    <button class="page"><svg><use href="#p-sun"/></svg>日照分析</button>
    <button class="page"><svg><use href="#p-tool"/></svg>通用工具</button>
    <button class="page"><svg><use href="#p-lib"/></svg>图　　库</button>
    <button class="page"><svg><use href="#p-help"/></svg>设置帮助</button>
  </aside>

  <div class="column">
    <div class="tools">
      <i class="grip-h"></i>
      <button aria-label="直线"><svg><use href="#line"/></svg></button>
      <button aria-label="构造线"><svg><use href="#xline"/></svg></button>
      <button aria-label="多段线"><svg><use href="#pline"/></svg></button>
      <button aria-label="多边形"><svg><use href="#polygon"/></svg></button>
      <button aria-label="矩形"><svg><use href="#rect"/></svg></button>
      <button aria-label="圆弧"><svg><use href="#arc"/></svg></button>
      <button aria-label="圆"><svg><use href="#circle"/></svg></button>
      <button aria-label="云线"><svg><use href="#cloud"/></svg></button>
      <button aria-label="样条曲线"><svg><use href="#spline"/></svg></button>
      <button aria-label="椭圆"><svg><use href="#ellipse"/></svg></button>
      <button aria-label="椭圆弧"><svg><use href="#earc"/></svg></button>
      <button aria-label="插入块"><svg><use href="#insert"/></svg></button>
      <button aria-label="创建块"><svg><use href="#mkblock"/></svg></button>
      <button aria-label="点"><svg><use href="#point"/></svg></button>
      <button aria-label="填充"><svg><use href="#hatch"/></svg></button>
      <button aria-label="渐变"><svg><use href="#grad"/></svg></button>
      <button aria-label="面域"><svg><use href="#region"/></svg></button>
      <button aria-label="表格"><svg><use href="#tbl"/></svg></button>
      <button aria-label="多行文字"><svg><use href="#mtext"/></svg></button>
      <button aria-label="添加选定"><svg><use href="#move3"/></svg></button>
    </div>
  </div>
  <div class="column">
    <div class="tools">
      <i class="grip-h"></i>
      <button aria-label="绘制轴网"><svg><use href="#r-grid"/></svg></button>
      <button aria-label="轴网标注"><svg><use href="#g-dim"/></svg></button>
      <button aria-label="添补轴号"><svg><use href="#g-num"/></svg></button>
      <hr>
      <button aria-label="绘制墙体"><svg><use href="#r-clean"/></svg></button>
      <button aria-label="墙体"><svg><use href="#r-bar"/></svg></button>
      <button aria-label="门窗"><svg><use href="#r-door"/></svg></button>
      <button aria-label="单线变墙"><svg><use href="#r-win"/></svg></button>
      <button aria-label="门"><svg><use href="#r-arc"/></svg></button>
      <button aria-label="柱"><svg><use href="#r-target"/></svg></button>
      <hr>
      <button aria-label="编辑文字"><svg><use href="#r-symp"/></svg></button>
      <button aria-label="单行文字"><svg><use href="#r-sym"/></svg></button>
      <button aria-label="段落文字"><svg><use href="#r-para"/></svg></button>
      <hr>
      <button aria-label="门窗标注"><svg><use href="#r-d1"/></svg></button>
      <button aria-label="逐点标注"><svg><use href="#r-d2"/></svg></button>
      <button aria-label="两点标注"><svg><use href="#r-d3"/></svg></button>
      <button aria-label="半径标注"><svg><use href="#r-c"/></svg></button>
      <button aria-label="角度标注"><svg><use href="#r-ang"/></svg></button>
      <button aria-label="弧长标注"><svg><use href="#r-d4"/></svg></button>
      <hr>
      <button aria-label="自由复制"><svg><use href="#r-cc"/></svg></button>
      <button aria-label="连接线段"><svg><use href="#r-ln"/></svg></button>
      <button aria-label="自由移动"><svg><use href="#r-mv"/></svg></button>
      <button aria-label="自由粘贴"><svg><use href="#r-pg"/></svg></button>
    </div>
  </div>

  <section class="doc">
    <div class="doc-tabs"><button class="doc-tab">演示户型<span>×</span></button></div>
    <div class="viewport">
      <svg class="canvas" role="img" aria-label="轴网">
        <g class="axis">
          <path class="red" d="M134.500 56v195" stroke-dashoffset="8"/>
          <path class="red" d="M149.500 56v176" stroke-dashoffset="3"/>
          <path class="red" d="M179.500 74v177" stroke-dashoffset="2"/>
          <path class="red" d="M192.500 56v176" stroke-dashoffset="3"/>
          <path class="rose" d="M218 56v195" stroke-dashoffset="8"/>
          <path class="crimson" d="M254.500 56v176" stroke-dashoffset="3"/><path class="amber" d="M255.500 56v176" stroke-dashoffset="3"/>
          <path class="crimson" d="M270.500 56v195" stroke-dashoffset="8"/><path class="amber" d="M271.500 56v195" stroke-dashoffset="8"/>
          <path class="crimson" d="M121 68.500h164" stroke-dashoffset="8"/><path class="coral" d="M121 69.500h164" stroke-dashoffset="8"/>
          <path class="wine" d="M121 84.500h144" stroke-dashoffset="2"/><path class="amber" d="M121 85.500h144" stroke-dashoffset="2"/>
          <path class="brown" d="M121 130.500h164" stroke-dashoffset="8"/><path class="coral" d="M121 131.500h164" stroke-dashoffset="8"/>
          <path class="coral" d="M121 156.500h164" stroke-dashoffset="8"/>
          <path class="dark" d="M121 217.500h164" stroke-dashoffset="8"/>
          <path class="rust" d="M121 238h164" stroke-dashoffset="8"/>
        </g>
        <g class="ucs">
          <path d="M13.500 283v30M17 317.500h30M10.500 314.500h6v6h-6zM12.500 316.500h2"/>
          <text x="13" y="280">Y</text><text x="50" y="318">X</text>
        </g>
        <path class="cross" d="M0 252.500h4000"/>
        <svg x="100%" overflow="visible"><path class="cross" d="M-2.500 0v4000"/><path class="pick" d="M-6.500 249.500h6v6h-6z"/></svg>
      </svg>
      <div class="scroll-v"><button aria-label="向上"><svg><use href="#chevu"/></svg></button><i class="before"></i><i class="thumb"></i><i class="after"></i><button aria-label="向下"><svg><use href="#chev"/></svg></button></div>
    </div>
    <div class="layouts">
      <button class="step" aria-label="首个"><svg><use href="#first"/></svg></button>
      <button class="step" aria-label="前一个"><svg><use href="#prev"/></svg></button>
      <button class="step" aria-label="后一个"><svg><use href="#next"/></svg></button>
      <button class="step" aria-label="末个"><svg><use href="#last"/></svg></button>
      <button class="layout current">模型</button><button class="layout">布局1</button><button class="layout">布局2</button><button class="layout add">+</button>
      <i class="splitter"></i>
      <div class="scroll-h"><button aria-label="向左"><svg><use href="#chevl"/></svg></button><i class="before"></i><i class="thumb"></i><i class="after"></i><button aria-label="向右"><svg><use href="#chevr"/></svg></button></div>
    </div>
  </section>

  <div class="column">
    <div class="tools">
      <i class="grip-h"></i>
      <button aria-label="删除"><svg><use href="#erase"/></svg></button>
      <button aria-label="复制"><svg><use href="#move3"/></svg></button>
      <button aria-label="镜像"><svg><use href="#mirror"/></svg></button>
      <button aria-label="偏移"><svg><use href="#offset"/></svg></button>
      <button aria-label="阵列"><svg><use href="#array"/></svg></button>
      <button aria-label="移动"><svg><use href="#move"/></svg></button>
      <button aria-label="旋转"><svg><use href="#rotate"/></svg></button>
      <button aria-label="缩放"><svg><use href="#scale"/></svg></button>
      <button aria-label="拉伸"><svg><use href="#stretch"/></svg></button>
      <button aria-label="修剪"><svg><use href="#trim"/></svg></button>
      <button aria-label="延伸"><svg><use href="#extend"/></svg></button>
      <button aria-label="打断于点"><svg><use href="#break1"/></svg></button>
      <button aria-label="打断"><svg><use href="#break2"/></svg></button>
      <button aria-label="合并"><svg><use href="#join"/></svg></button>
      <button aria-label="倒角"><svg><use href="#chamfer"/></svg></button>
      <button aria-label="圆角"><svg><use href="#fillet"/></svg></button>
      <button aria-label="分解"><svg><use href="#box"/></svg></button>
      <i class="grip-h"></i>
      <button aria-label="前置"><svg><use href="#o1"/></svg></button>
      <button aria-label="后置"><svg><use href="#o2"/></svg></button>
      <button aria-label="置于对象之上"><svg><use href="#o3"/></svg></button>
      <button aria-label="置于对象之下"><svg><use href="#o4"/></svg></button>
      <hr>
      <button aria-label="文字前置"><svg><use href="#o5"/></svg></button>
      <button aria-label="填充后置"><svg><use href="#o6"/></svg></button>
    </div>
  </div>
</main>

<section class="command">
  <div class="command-side"><button aria-label="关闭命令行"><svg><use href="#close"/></svg></button><button aria-label="固定命令行"><svg><use href="#pin"/></svg></button></div>
  <div class="command-body">
    <div class="history"><div class="lines"><p>命令:</p><p>命令:_qsave</p></div><div class="scroll-v"><button aria-label="历史向上"><svg><use href="#chevu"/></svg></button><button aria-label="历史向下"><svg><use href="#chev"/></svg></button></div></div>
    <div class="prompt"><label for="cmd">命令:</label><input id="cmd" type="text"><div class="scroll-h"><button aria-label="命令向左"><svg><use href="#chevl"/></svg></button><i class="thumb"></i><i class="after"></i><button aria-label="命令向右"><svg><use href="#chevr"/></svg></button></div></div>
  </div>
</section>

<footer class="status">
  <span>比例</span><button class="label">1:100<svg><use href="#tri"/></svg></button><span>单位:mm</span><span class="coords">107106, -103155, 0</span>
  <div class="toggles">
    <button aria-label="捕捉"><svg><use href="#s-snap"/></svg></button>
    <button aria-label="栅格"><svg><use href="#s-grid"/></svg></button>
    <button class="on" aria-label="正交"><svg><use href="#s-ortho"/></svg></button>
    <button aria-label="极轴"><svg><use href="#s-polar"/></svg></button>
    <button class="on" aria-label="对象捕捉"><svg><use href="#s-osnap"/></svg></button>
    <button class="on" aria-label="对象追踪"><svg><use href="#s-track"/></svg></button>
    <button aria-label="动态坐标"><svg><use href="#s-plus"/></svg></button>
    <button class="on" aria-label="动态输入"><svg><use href="#s-dyn"/></svg></button>
    <button aria-label="线宽"><svg><use href="#s-lw"/></svg></button>
    <button aria-label="选择循环"><svg><use href="#s-cycle"/></svg></button>
    <button aria-label="图层"><svg><use href="#layersb"/></svg></button>
    <button aria-label="缩放"><svg><use href="#zoomin"/></svg></button>
    <button class="on" aria-label="模型"><svg><use href="#s-sel"/></svg></button>
    <button aria-label="注释比例"><svg><use href="#s-man"/></svg></button>
    <button class="label ratio">1:1<svg><use href="#tri"/></svg></button>
    <button aria-label="注释可见"><svg><use href="#s-many"/></svg></button>
    <button aria-label="自动注释"><svg><use href="#s-mana"/></svg></button>
    <button class="on" aria-label="填充"><svg><use href="#s-hatch"/></svg></button>
    <button aria-label="页面"><svg><use href="#s-page"/></svg></button>
    <i class="gap"></i>
    <button aria-label="设置"><svg><use href="#s-gear"/></svg></button>
    <button aria-label="锁定"><svg><use href="#unlockb"/></svg></button>
    <button aria-label="隔离"><svg><use href="#bulb"/></svg></button>
    <button aria-label="硬件"><svg><use href="#s-mon"/></svg></button>
    <button aria-label="全屏"><svg><use href="#s-full"/></svg></button>
  </div>
  <span class="brand">GstarCAD</span>
  <svg class="resize" viewBox="0 0 8 8"><path d="M6 1h1M4 3.500h1M6 3.500h1M2 6h1M4 6h1M6 6h1"/></svg>
</footer>
</body>
</html>
```
FILE: styles.css
```css
* { box-sizing: border-box; }
html, body { height: 100%; margin: 0; }
body {
  display: flex;
  flex-direction: column;
  min-height: 440px;
  overflow: hidden;
  background: #f0f0f0;
  color: #3d3f43;
  font: 8px/10px "Liberation Sans", "Noto Sans CJK SC", sans-serif;
}
h1, h2, p, hr { margin: 0; font-weight: normal; font-size: inherit; }
a { color: inherit; text-decoration: none; }
i, b { display: block; flex: none; }
button {
  display: flex;
  align-items: center;
  justify-content: center;
  flex: none;
  margin: 0;
  padding: 0;
  border: 0;
  background: none;
  color: inherit;
  font: inherit;
  white-space: nowrap;
}
svg { display: block; flex: none; width: 12px; height: 12px; }
symbol { fill: none; stroke: #4a4a4a; }
.sprite { position: absolute; width: 0; height: 0; }
select, input {
  appearance: none;
  flex: 1;
  min-width: 0;
  width: 0;
  height: 100%;
  margin: 0;
  padding: 0;
  border: 0;
  outline: 0;
  background: none;
  color: inherit;
  font: inherit;
}

/* Title and menus */
.top { flex: none; background: linear-gradient(#fdfdfe, #f7f9fd 40%, #f2f5fc); }
.title-row { display: flex; align-items: center; height: 18px; padding: 0 4px 0 2px; }
.logo { width: 26px; height: 26px; align-self: flex-start; margin-top: 2px; margin-bottom: -12px; }
.logo-letter { font: italic bold 19px "Liberation Sans", sans-serif; fill: #2c35b4; }
.quick { display: flex; align-items: center; margin-left: 3px; }
.quick button { width: 14px; }
.quick .slim, .bar .slim { width: 8px; }
.slim svg { width: 8px; height: 8px; }
.combo {
  display: flex;
  align-items: center;
  flex: none;
  height: 13px;
  min-width: 0;
  padding: 0 1px 0 3px;
  border: 1px solid #c3c6cc;
  background: #fff;
}
.combo > svg:last-child { width: 8px; height: 8px; margin: 0 1px; }
.workspace { width: 78px; margin-right: 9px; padding-left: 1px; border-color: #a9c0dc; }
.title-row h1 { flex: 1; margin-left: 93px; line-height: 18px; white-space: nowrap; }
.window { display: flex; gap: 17px; padding: 0 6px; }
.window button { width: 12px; }
.window svg { width: 8px; height: 8px; fill: none; stroke: #555; }
.menu-row { display: flex; align-items: center; height: 14px; padding-left: 35px; }
.menus { display: flex; justify-content: space-between; flex: 1; white-space: nowrap; }
small { font-size: 7px; }
.look { display: flex; align-items: center; margin-left: 18px; }
.look svg { width: 6px; height: 6px; }
.docwin { display: flex; gap: 3px; padding: 0 2px 0 3px; }
.docwin button { width: 9px; height: 10px; background: #fcfcfd; }
.docwin svg { width: 8px; height: 8px; fill: none; stroke: #444; }
.menu-extra { height: 13px; padding-left: 6px; line-height: 11px; }

/* Horizontal toolbars */
.bar {
  display: flex;
  align-items: center;
  flex: none;
  height: 15px;
  padding-left: 2px;
  border-top: 1px solid #e2e6ee;
  background: #eff2f8;
  overflow: hidden;
}
.bar + main { border-top: 1px solid #dfe3ea; }
.bar button { width: 15px; height: 14px; }
.grip { width: 5px; height: 14px; background: #a9bbcf; border-right: 1px solid #d7e0eb; }
.sep { width: 1px; height: 11px; margin: 0 2px; background: #b9bec6; }
.cad { font-family: "Liberation Serif", "Noto Sans CJK SC", serif; }
.grow { flex: 1; }
.indent { padding-left: 14px; }
.layer { width: 191px; background: #dfe0e2; }
.layer svg { width: 10px; height: 10px; }
.swatch { width: 8px; height: 8px; margin-right: 2px; background: #f00000; }
.color { width: 94px; }
.dash { width: 27px; height: 1px; margin-right: 2px; background: #555; }
.long { width: 46px; background: linear-gradient(90deg, #555 22px, #0000 22px 24px, #555 24px 40px, #0000 40px 42px, #555 42px); }
.plot { width: 42px; margin-right: -6px; padding-left: 12px; }

/* Work area */
main { display: flex; flex: 1; min-height: 0; background: #e0e8f4; }
.palette {
  display: flex;
  flex-direction: column;
  flex: none;
  width: 78px;
  margin: 1px 2px 0 1px;
  padding: 0 3px 4px;
  background: #fff;
}
.palette-title { display: flex; align-items: center; height: 11px; margin: 0 -3px 4px; padding: 0 2px; background: #ccd9ea; }
.palette-title h2 { flex: 1; }
.palette-title button { width: 11px; }
.palette-title svg { width: 8px; height: 8px; }
.group {
  justify-content: space-between;
  height: 13px;
  padding: 0 2px 0 13px;
  border: 1px solid #d3e1f1;
  background: linear-gradient(#eaf2fb, #d5e2f1);
}
.open { border-color: #9db8d5; }
.group svg { width: 8px; height: 8px; }
.items { display: flex; flex-direction: column; flex: 1; min-height: 0; }
.items button { flex: 1; justify-content: flex-start; gap: 2px; padding-left: 1px; min-height: 0; }
.items svg { width: 10px; height: 10px; }
.items hr { height: 1px; border: 0; background: #8cb1dd; }
.page {
  height: 16px;
  justify-content: flex-start;
  gap: 3px;
  padding-left: 2px;
  border-bottom: 1px solid #8fb2dc;
  background: linear-gradient(#dfebfb, #bcd5f5 50%, #a7c8f2 51%, #c7defa);
}
.page svg { width: 15px; height: 15px; }
.active { background: linear-gradient(#fdd9a0, #fcb250 50%, #f99a25 51%, #fdc96c); border-color: #c98d42; }
.column { flex: none; width: 15px; padding: 1px 0 0; }
.column + .column { margin-left: 1px; }
.tools { display: flex; flex-direction: column; align-items: center; padding-bottom: 1px; background: #f7f9fd; }
.tools button { width: 14px; height: 14px; }
.tools hr { width: 12px; height: 1px; margin: 2px 0; border: 0; background: #b4b7bd; }
.grip-h { align-self: stretch; height: 6px; background: #a9bbcf; border-bottom: 1px solid #cfd9e5; }
button + .grip-h { margin: 1px 0; }

/* Drawing window */
.doc { display: flex; flex-direction: column; flex: 1; min-width: 0; background: #f0f0f0; }
.doc-tabs { flex: none; height: 14px; padding: 1px 0 0 1px; border-bottom: 1px solid #777; }
.doc-tab {
  height: 12px;
  gap: 8px;
  padding: 0 4px 0 14px;
  background: linear-gradient(#ffedc5, #fbbf5e);
  clip-path: polygon(0 100%, 10px 0, 100% 0, 100% 100%);
}
.doc-tab span { color: #fff3d8; }
.viewport { display: flex; flex: 1; min-height: 0; }
.canvas { flex: 1; width: 0; height: 100%; background: #212830; }
.axis path { fill: none; stroke-dasharray: 26 2 1 2; }
.red { stroke: #e00f1d; }
.dark { stroke: #c81822; }
.rose { stroke: #a0353f; stroke-width: 2; }
.crimson { stroke: #a8173f; }
.wine { stroke: #7c1c34; }
.amber { stroke: #b9691a; }
.coral { stroke: #d4484a; }
.brown { stroke: #6f3a1a; }
.rust { stroke: #9c3426; stroke-width: 2; }
.ucs path { fill: none; stroke: #c9cbcd; }
.ucs text { font-size: 13px; fill: #d5d7d9; }
.cross { fill: none; stroke: #e4e6e8; }
.pick { fill: none; stroke: #c8cacc; }
.scroll-v, .scroll-h { display: flex; align-items: center; flex: none; background: #f1f1f1; }
.scroll-v { flex-direction: column; width: 12px; }
.scroll-v button, .scroll-h button { width: 11px; height: 11px; }
.scroll-v svg, .scroll-h svg { width: 8px; height: 8px; }
.thumb { width: 10px; height: 10px; background: #cdcdcd; }
.scroll-v .before { flex: 2; }
.scroll-v .after { flex: 1; }
.layouts { display: flex; align-items: center; flex: none; height: 13px; border-top: 1px solid #888; }
.step { width: 12px; }
.step svg { width: 7px; height: 7px; }
.layout { position: relative; height: 11px; padding: 0 5px 0 3px; }
.layout::after { content: ""; position: absolute; right: 0; top: 0; height: 11px; border-right: 1px solid #777; transform: skewX(-25deg); }
.current { padding: 0 8px; background: #20272f; color: #fff; clip-path: polygon(0 0, 100% 0, calc(100% - 5px) 100%, 5px 100%); }
.add { padding: 0 7px 0 5px; }
.splitter { width: 3px; height: 10px; margin-left: auto; border: 1px solid #999; }
.layouts .scroll-h { flex: 0 1 48%; }
.layouts .scroll-h .before { flex: 1; }
.layouts .scroll-h .after { flex: 1; }

/* Command line */
.command { display: flex; flex: none; margin: 3px 0 0 1px; }
.command-side { flex: none; width: 12px; padding-top: 3px; background: #cbd9ec; }
.command-side button { width: 11px; height: 12px; }
.command-side svg { width: 8px; height: 8px; }
.command-body { flex: 1; min-width: 0; border-top: 1px solid #8d8d8d; background: #fff; font-family: "DejaVu Sans", "Noto Sans CJK SC", sans-serif; }
.history { display: flex; height: 25px; border-bottom: 1px solid #999; }
.lines { flex: 1; padding: 1px 3px; }
.lines p { line-height: 12px; }
.history .scroll-v { justify-content: space-between; }
.prompt { display: flex; align-items: center; height: 12px; padding-left: 3px; }
.prompt .scroll-h { width: 52px; margin-right: 12px; }
.prompt .after { flex: 1; }

/* Status bar */
.status { display: flex; align-items: center; flex: none; height: 17px; padding: 0 1px 0 3px; gap: 3px; border-top: 1px solid #dcdcdc; white-space: nowrap; }
.label svg { width: 8px; height: 8px; }
.coords { margin-left: 3px; }
.toggles { display: flex; flex: none; align-items: center; margin-left: auto; }
.toggles button { width: 14px; height: 13px; }
.toggles .ratio { width: 15px; font-size: 7px; }
.ratio svg { width: 6px; height: 6px; }
.toggles .on { border: 1px solid #eeb85d; background: #fde8ba; }
.toggles .gap { width: 6px; }
.status .resize { width: 8px; height: 8px; stroke: #999; }
```
